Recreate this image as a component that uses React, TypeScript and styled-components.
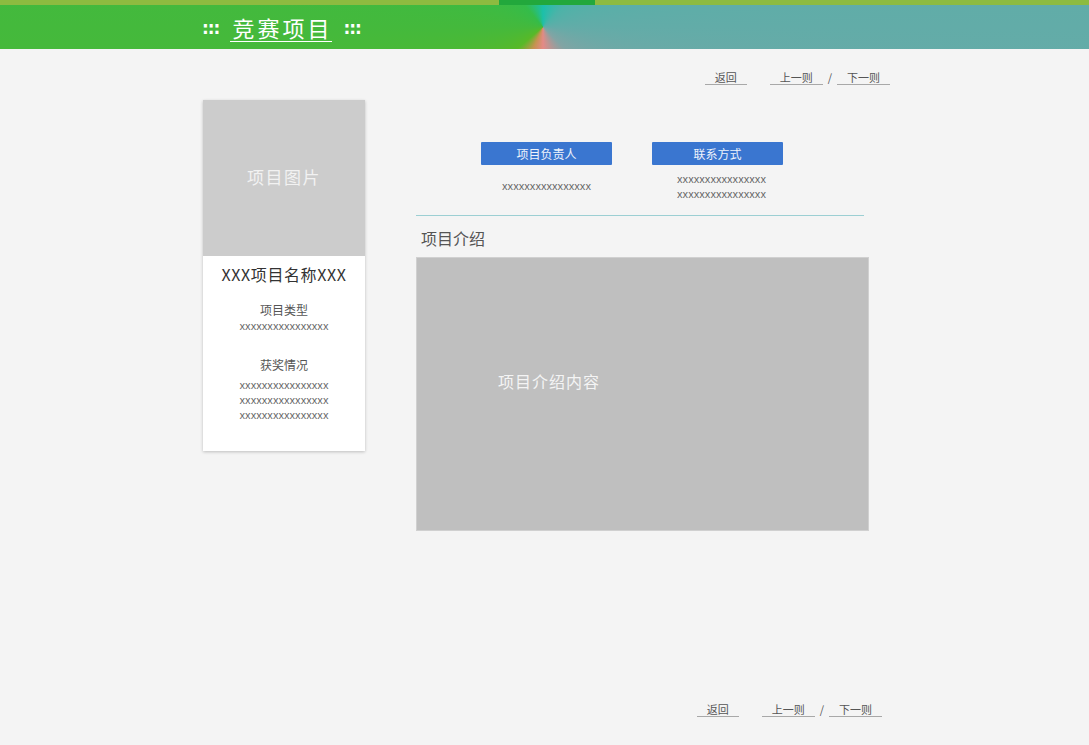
import React from "react";
import styled, { createGlobalStyle } from "styled-components";

const GlobalStyle = createGlobalStyle`
  body {
    margin: 0;
    background: #f4f4f4;
    font-family: "Noto Sans CJK SC", "Noto Sans", sans-serif;
  }
`;

const TopStrip = styled.div`
  height: 5px;
  background: #8dbb40;
  display: flex;
`;

const StripMark = styled.div`
  width: 96px;
  margin-left: 499px;
  background: #22a83c;
`;

const Header = styled.div`
  height: 44px;
  background: conic-gradient(
    from 0deg at 543px 22px,
    #1cc0aa 0deg,
    #4cb3a8 45deg,
    #62aca8 90deg,
    #82a4a4 135deg,
    #e48a86 180deg,
    #c59350 205deg,
    #58b928 230deg,
    #44b93c 270deg,
    #34bc4a 320deg,
    #1cc0aa 360deg
  );
  display: flex;
  align-items: center;
  padding-left: 202px;
  gap: 11px;
`;

const Dots = styled.span`
  color: #fff;
  font-family: "DejaVu Sans", sans-serif;
  font-size: 17px;
  font-weight: 700;
  letter-spacing: -1px;
  line-height: 1;
  margin-top: 3px;
`;

const Title = styled.span`
  color: #fff;
  font-size: 22px;
  letter-spacing: 3px;
  line-height: 28px;
  border-bottom: 1.5px solid #fff;
  padding: 0 0 0 2px;
`;

const Page = styled.div`
  width: 687px;
  margin-left: 203px;
  padding-top: 21px;
`;

const Nav = styled.div<{ shift?: number }>`
  display: flex;
  justify-content: flex-end;
  align-items: flex-end;
  margin-right: ${({ shift }) => shift || 0}px;
  font-size: 11px;
  color: #555;
`;

const NavLink = styled.span<{ gapAfter?: number }>`
  display: inline-block;
  padding: 0 10px;
  line-height: 14px;
  border-bottom: 1px solid #a8a8a8;
  margin-right: ${({ gapAfter }) => gapAfter || 0}px;
`;

const Slash = styled.span`
  line-height: 14px;
  padding: 0 5px 1px;
`;

const Body = styled.div`
  display: flex;
  align-items: flex-start;
  gap: 51px;
  margin-top: 15px;
`;

const Card = styled.div`
  width: 162px;
  background: #fff;
  box-shadow: 0 1px 3px rgba(0, 0, 0, 0.22);
  padding-bottom: 28px;
  text-align: center;
`;

const CardImage = styled.div`
  height: 156px;
  background: #cccccc;
  color: #f2f2f2;
  font-size: 17px;
  letter-spacing: 1.5px;
  display: flex;
  align-items: center;
  justify-content: center;
  padding-bottom: 3px;
  box-sizing: border-box;
`;

const CardName = styled.div`
  margin-top: 7px;
  font-size: 16px;
  color: #333;
  letter-spacing: 0.6px;
  line-height: 22px;
`;

const Label = styled.div<{ top: number }>`
  margin-top: ${({ top }) => top}px;
  font-size: 12px;
  color: #555;
  line-height: 18px;
`;

const XLine = styled.div<{ nudge?: number }>`
  font-size: 10.5px;
  color: #666;
  line-height: 15px;
  font-family: "Noto Sans", sans-serif;
  padding-left: ${({ nudge }) => nudge || 0}px;
`;

const Main = styled.div`
  width: 453px;
`;

const InfoRow = styled.div`
  display: flex;
  gap: 40px;
  padding-left: 65px;
  margin-top: 42px;
  height: 73px;
`;

const InfoCol = styled.div`
  width: 131px;
  display: flex;
  flex-direction: column;
  align-items: center;
`;

const InfoButton = styled.div<{ offset?: number }>`
  width: 131px;
  height: 23px;
  background: #3a76d0;
  color: #eef3fb;
  font-size: 12px;
  display: flex;
  align-items: center;
  justify-content: center;
  border-radius: 1px;
  margin-bottom: ${({ offset }) => offset || 0}px;
`;

const Divider = styled.div`
  width: 448px;
  height: 1px;
  background: #9ccfd3;
`;

const SectionTitle = styled.div`
  font-size: 16px;
  color: #555;
  margin: 11px 0 8px 5px;
  line-height: 22px;
`;

const IntroBox = styled.div`
  height: 274px;
  background: #bfbfbf;
  border: 1px solid #d0d0d0;
  color: #f4f4f4;
  font-size: 16px;
  letter-spacing: 1px;
  padding: 112px 0 0 81px;
  box-sizing: border-box;
  line-height: 22px;
`;

const Bottom = styled.div`
  margin-top: 171px;
`;

const NavBar: React.FC<{ shift?: number }> = ({ shift }) => (
  <Nav shift={shift}>
    <NavLink gapAfter={23}>返回</NavLink>
    <NavLink>上一则</NavLink>
    <Slash>/</Slash>
    <NavLink>下一则</NavLink>
  </Nav>
);

export default function App() {
  return (
    <>
      <GlobalStyle />
      <TopStrip>
        <StripMark />
      </TopStrip>
      <Header>
        <Dots>:::</Dots>
        <Title>竞赛项目</Title>
        <Dots>:::</Dots>
      </Header>
      <Page>
        <NavBar />
        <Body>
          <Card>
            <CardImage>项目图片</CardImage>
            <CardName>XXX项目名称XXX</CardName>
            <Label top={16}>项目类型</Label>
            <XLine>xxxxxxxxxxxxxxxx</XLine>
            <Label top={22}>获奖情况</Label>
            <div style={{ height: 4 }} />
            <XLine>xxxxxxxxxxxxxxxx</XLine>
            <XLine>xxxxxxxxxxxxxxxx</XLine>
            <XLine>xxxxxxxxxxxxxxxx</XLine>
          </Card>
          <Main>
            <InfoRow>
              <InfoCol>
                <InfoButton offset={14}>项目负责人</InfoButton>
                <XLine>xxxxxxxxxxxxxxxx</XLine>
              </InfoCol>
              <InfoCol>
                <InfoButton offset={7}>联系方式</InfoButton>
                <XLine nudge={8}>xxxxxxxxxxxxxxxx</XLine>
                <XLine nudge={8}>xxxxxxxxxxxxxxxx</XLine>
              </InfoCol>
            </InfoRow>
            <Divider />
            <SectionTitle>项目介绍</SectionTitle>
            <IntroBox>项目介绍内容</IntroBox>
          </Main>
        </Body>
        <Bottom>
          <NavBar shift={8} />
        </Bottom>
      </Page>
    </>
  );
}
